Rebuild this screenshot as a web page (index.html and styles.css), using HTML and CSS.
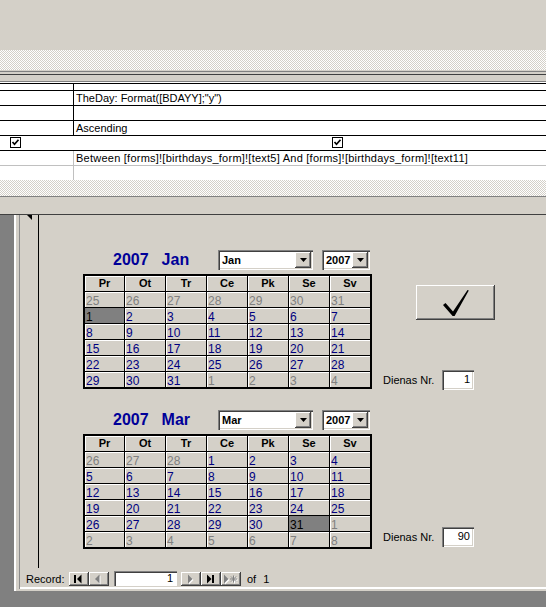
FILE: index.html
```html
<!DOCTYPE html>
<html lang="lv">
<head>
    <meta charset="UTF-8">
    <title>birthdays_form</title>
    <link rel="stylesheet" href="styles.css">
</head>
<body>

<!-- Query design window (lower pane) -->
<div class="query">
    <div class="query-pane"></div>
    <div class="dither"></div>
    <div class="splitter"></div>
    <div class="grid">
        <div class="grid-row selectors"><div class="grid-label"></div><div class="grid-cell"></div></div>
        <div class="grid-row"><div class="grid-label"></div><div class="grid-cell">TheDay: Format([BDAYY];"y")</div></div>
        <div class="grid-row"><div class="grid-label"></div><div class="grid-cell"></div></div>
        <div class="grid-row"><div class="grid-label"></div><div class="grid-cell">Ascending</div></div>
        <div class="grid-row show">
            <div class="grid-label"><span class="check check-first"><svg width="9" height="9" viewBox="0 0 9 9"><path d="M1.5 4 L3.5 6.2 L7.5 1.8" fill="none" stroke="#000" stroke-width="1.7"/></svg></span></div>
            <div class="grid-cell"><span class="check check-second"><svg width="9" height="9" viewBox="0 0 9 9"><path d="M1.5 4 L3.5 6.2 L7.5 1.8" fill="none" stroke="#000" stroke-width="1.7"/></svg></span></div>
        </div>
        <div class="grid-row criteria"><div class="grid-label"></div><div class="grid-cell">Between [forms]![birthdays_form]![text5] And [forms]![birthdays_form]![text11]</div></div>
        <div class="grid-row last"><div class="grid-label"></div><div class="grid-cell"></div></div>
    </div>
    <div class="dither dither-low"></div>
    <div class="query-foot"></div>
</div>

<!-- Form window -->
<div class="workspace">
    <div class="form">
        <div class="form-inner">
            <div class="form-body">
                <div class="selector">
                    <svg class="selector-mark" width="5" height="5" viewBox="0 0 5 5"><polygon points="0,0 5,0 5,5"/></svg>
                </div>
                <div class="detail">

                    <!-- From date -->
                    <div class="cal-block">
                        <div class="cal">
                            <div class="cal-head">
                                <div class="cal-title">2007<span class="cal-month">Jan</span></div>
                                <div class="combo combo-month">
                                    <span class="combo-text">Jan</span>
                                    <span class="combo-btn"><svg width="7" height="4" viewBox="0 0 7 4"><polygon points="0,0 7,0 3.5,4"/></svg></span>
                                </div>
                                <div class="combo combo-year">
                                    <span class="combo-text">2007</span>
                                    <span class="combo-btn"><svg width="7" height="4" viewBox="0 0 7 4"><polygon points="0,0 7,0 3.5,4"/></svg></span>
                                </div>
                            </div>
                            <div class="cal-grid">
                                <div class="dow">Pr</div><div class="dow">Ot</div><div class="dow">Tr</div><div class="dow">Ce</div><div class="dow">Pk</div><div class="dow">Se</div><div class="dow">Sv</div>
                                <div class="day out">25</div><div class="day out">26</div><div class="day out">27</div><div class="day out">28</div><div class="day out">29</div><div class="day out">30</div><div class="day out">31</div>
                                <div class="day sel">1</div><div class="day">2</div><div class="day">3</div><div class="day">4</div><div class="day">5</div><div class="day">6</div><div class="day">7</div>
                                <div class="day">8</div><div class="day">9</div><div class="day">10</div><div class="day">11</div><div class="day">12</div><div class="day">13</div><div class="day">14</div>
                                <div class="day">15</div><div class="day">16</div><div class="day">17</div><div class="day">18</div><div class="day">19</div><div class="day">20</div><div class="day">21</div>
                                <div class="day">22</div><div class="day">23</div><div class="day">24</div><div class="day">25</div><div class="day">26</div><div class="day">27</div><div class="day">28</div>
                                <div class="day">29</div><div class="day">30</div><div class="day">31</div><div class="day out">1</div><div class="day out">2</div><div class="day out">3</div><div class="day out">4</div>
                            </div>
                        </div>
                        <div class="side">
                            <div class="ok-btn">
                                <svg width="28" height="28" viewBox="0 0 28 28"><polygon points="1,16 3.5,14 11,22.5 25.5,1 26.8,1.6 12.6,27 10.6,27"/></svg>
                            </div>
                            <div class="dienas">
                                <span class="dienas-label">Dienas Nr.</span>
                                <div class="field">1</div>
                            </div>
                        </div>
                    </div>

                    <!-- To date -->
                    <div class="cal-block second">
                        <div class="cal">
                            <div class="cal-head">
                                <div class="cal-title">2007<span class="cal-month">Mar</span></div>
                                <div class="combo combo-month">
                                    <span class="combo-text">Mar</span>
                                    <span class="combo-btn"><svg width="7" height="4" viewBox="0 0 7 4"><polygon points="0,0 7,0 3.5,4"/></svg></span>
                                </div>
                                <div class="combo combo-year">
                                    <span class="combo-text">2007</span>
                                    <span class="combo-btn"><svg width="7" height="4" viewBox="0 0 7 4"><polygon points="0,0 7,0 3.5,4"/></svg></span>
                                </div>
                            </div>
                            <div class="cal-grid">
                                <div class="dow">Pr</div><div class="dow">Ot</div><div class="dow">Tr</div><div class="dow">Ce</div><div class="dow">Pk</div><div class="dow">Se</div><div class="dow">Sv</div>
                                <div class="day out">26</div><div class="day out">27</div><div class="day out">28</div><div class="day">1</div><div class="day">2</div><div class="day">3</div><div class="day">4</div>
                                <div class="day">5</div><div class="day">6</div><div class="day">7</div><div class="day">8</div><div class="day">9</div><div class="day">10</div><div class="day">11</div>
                                <div class="day">12</div><div class="day">13</div><div class="day">14</div><div class="day">15</div><div class="day">16</div><div class="day">17</div><div class="day">18</div>
                                <div class="day">19</div><div class="day">20</div><div class="day">21</div><div class="day">22</div><div class="day">23</div><div class="day">24</div><div class="day">25</div>
                                <div class="day">26</div><div class="day">27</div><div class="day">28</div><div class="day">29</div><div class="day">30</div><div class="day sel">31</div><div class="day out">1</div>
                                <div class="day out">2</div><div class="day out">3</div><div class="day out">4</div><div class="day out">5</div><div class="day out">6</div><div class="day out">7</div><div class="day out">8</div>
                            </div>
                        </div>
                        <div class="side">
                            <div class="dienas">
                                <span class="dienas-label">Dienas Nr.</span>
                                <div class="field">90</div>
                            </div>
                        </div>
                    </div>

                </div>
            </div>

            <!-- Record navigation -->
            <div class="nav">
                <span class="nav-label">Record:</span>
                <span class="nav-btn"><svg width="20" height="14" viewBox="0 0 20 14"><rect x="5" y="3" width="2" height="8"/><polygon points="12.5,2.5 12.5,11.5 8,7"/></svg></span>
                <span class="nav-btn"><svg width="20" height="14" viewBox="0 0 20 14"><polygon points="11.5,3.5 11.5,12.5 7,8" fill="#fff"/><polygon points="10.5,2.5 10.5,11.5 6,7" fill="#808080"/></svg></span>
                <span class="nav-field">1</span>
                <span class="nav-btn gap"><svg width="20" height="14" viewBox="0 0 20 14"><polygon points="8,3.5 8,12.5 12.5,8" fill="#fff"/><polygon points="7,2.5 7,11.5 11.5,7" fill="#808080"/></svg></span>
                <span class="nav-btn"><svg width="20" height="14" viewBox="0 0 20 14"><polygon points="6,2.5 6,11.5 10.5,7"/><rect x="11" y="3" width="2" height="8"/></svg></span>
                <span class="nav-btn"><svg width="20" height="14" viewBox="0 0 20 14">
                    <g fill="#fff" stroke="#fff" transform="translate(1,1)"><polygon points="3,2.5 3,11.5 7.5,7" stroke="none"/><path d="M9 7 H16 M12.5 3.5 V10.5 M10 4.5 L15 9.5 M15 4.5 L10 9.5"/></g>
                    <g fill="#808080" stroke="#808080"><polygon points="3,2.5 3,11.5 7.5,7" stroke="none"/><path d="M9 7 H16 M12.5 3.5 V10.5 M10 4.5 L15 9.5 M15 4.5 L10 9.5"/></g>
                </svg></span>
                <span class="nav-of">of</span>
                <span class="nav-count">1</span>
            </div>
        </div>
    </div>
</div>

</body>
</html>
```

FILE: styles.css
```css
body {
    margin: 0;
    width: 546px;
    height: 607px;
    overflow: hidden;
    background-color: #808080;
    font-family: 'Liberation Sans', Arial, sans-serif;
    font-size: 11px;
    color: #000;
}

/* query design grid */
.query {
    background-color: #d4d0c8;
}
.query-pane {
    height: 50px;
}
.dither {
    height: 20px;
    background-image: repeating-conic-gradient(#ffffff 0 25%, #d4d0c8 0 50%);
    background-size: 2px 2px;
}
.dither-low {
    height: 16px;
}
.splitter {
    height: 14px;
    background: linear-gradient(to bottom,
        #d4d0c8 0 1px, #808080 1px 2px, #d4d0c8 2px 4px, #404040 4px 5px,
        #d4d0c8 5px 11px, #808080 11px 12px, #ffffff 12px 13px, #000 13px 14px);
}
.grid {
    background-color: #fff;
}
.grid-row {
    display: flex;
    height: 14px;
    line-height: 14px;
    border-bottom: 1px solid #000;
}
.grid-row.selectors {
    height: 6px;
}
.grid-row.criteria {
    border-bottom-color: #c0c0c0;
    letter-spacing: 0.24px;
}
.grid-row.last {
    border-bottom: none;
}
.grid-label {
    width: 73px;
    flex-shrink: 0;
    border-right: 1px solid #000;
}
.grid-row.show .grid-label {
    border-right-color: transparent;
}
.grid-row.criteria .grid-label,
.grid-row.last .grid-label {
    border-right-color: #c0c0c0;
}
.grid-cell {
    flex: 1;
    padding-left: 2px;
    white-space: nowrap;
}
.check {
    display: flex;
    align-items: center;
    justify-content: center;
    width: 11px;
    height: 11px;
    box-sizing: border-box;
    margin-top: 1px;
    border: 1px solid #000;
    background-color: #fff;
}
.check-first {
    margin-left: 10px;
}
.check-second {
    margin-left: 256px;
}
.query-foot {
    height: 17px;
    border-top: 1px solid #808080;
    border-bottom: 1px solid #404040;
}

/* form window */
.workspace {
    display: flex;
    height: 392px;
}
.form {
    display: flex;
    flex: 1;
    height: 376px;
    box-sizing: border-box;
    margin-left: 14px;
    padding: 0 0 2px 3px;
    border-left: 2px solid #fff;
    background-color: #d4d0c8;
}
.form-inner {
    flex: 1;
    display: flex;
    flex-direction: column;
    border-left: 1px solid #8c8c8c;
}
.form-body {
    display: flex;
    height: 353px;
}
.selector {
    width: 18px;
    flex-shrink: 0;
    border-right: 1px solid #000;
}
.selector-mark {
    display: block;
    margin-left: 7px;
}
.detail {
    flex: 1;
    padding: 35px 0 0 44px;
}

/* calendars */
.cal-block {
    display: flex;
}
.cal-block.second {
    margin-top: 21px;
}
.cal-head {
    display: flex;
    align-items: center;
    height: 20px;
    margin-bottom: 4px;
}
.cal-title {
    width: 105px;
    padding-left: 30px;
    font-size: 16px;
    font-weight: bold;
    color: #000099;
    white-space: nowrap;
}
.cal-month {
    margin-left: 13px;
}
.combo {
    display: flex;
    height: 20px;
    box-sizing: border-box;
    padding: 2px;
    background-color: #fff;
    box-shadow: inset 1px 1px #808080, inset 2px 2px #404040, inset -1px -1px #fff, inset -2px -2px #d4d0c8;
}
.combo-month {
    width: 95px;
}
.combo-year {
    width: 48px;
    margin-left: 9px;
}
.combo-text {
    flex: 1;
    padding-left: 2px;
    font-weight: bold;
    line-height: 16px;
}
.combo-btn {
    display: flex;
    align-items: center;
    justify-content: center;
    width: 16px;
    height: 16px;
    background-color: #d4d0c8;
    box-shadow: inset -1px -1px #404040, inset 1px 1px #fff, inset -2px -2px #808080;
}
.cal-grid {
    display: grid;
    grid-template-columns: 39px repeat(6, 40px);
    grid-auto-rows: 15px;
    gap: 1px;
    width: fit-content;
    border: 2px solid #000;
    background-color: #000;
}
.dow {
    background-color: #d4d0c8;
    box-shadow: inset 1px 1px #fff;
    font-weight: bold;
    text-align: center;
    line-height: 15px;
}
.day {
    box-sizing: border-box;
    padding: 3px 0 0 1px;
    font-size: 12px;
    line-height: 13px;
    background-color: #d4d0c8;
    box-shadow: inset 1px 1px #fff;
    color: #000080;
}
.day.out {
    color: #808080;
}
.day.sel {
    background-color: #808080;
    box-shadow: none;
    color: #000;
}
.side {
    display: flex;
    flex-direction: column;
    align-items: flex-start;
}
.ok-btn {
    display: flex;
    align-items: center;
    justify-content: center;
    width: 79px;
    height: 35px;
    margin: 35px 0 0 44px;
    background-color: #d4d0c8;
    box-shadow: inset -1px -1px #404040, inset 1px 1px #fff, inset -2px -2px #808080;
}
.dienas {
    display: flex;
    align-items: center;
    margin: auto 0 -1px 11px;
}
.cal-block.second .dienas {
    margin-bottom: 2px;
}
.dienas-label {
    width: 59px;
}
.field {
    width: 32px;
    height: 20px;
    box-sizing: border-box;
    padding: 3px 4px 0 0;
    text-align: right;
    line-height: 13px;
    background-color: #fff;
    box-shadow: inset 1px 1px #808080, inset 2px 2px #404040, inset -1px -1px #fff, inset -2px -2px #d4d0c8;
}

/* record navigation */
.nav {
    display: flex;
    align-items: flex-start;
    height: 21px;
    box-sizing: border-box;
    padding: 4px 0 0 6px;
    border-bottom: 2px solid #fff;
    line-height: 14px;
}
.nav-label {
    width: 43px;
}
.nav-btn {
    display: block;
    width: 20px;
    height: 14px;
    background-color: #d4d0c8;
    box-shadow: inset -1px -1px #404040, inset 1px 1px #fff, inset -2px -2px #808080;
}
.nav-btn svg {
    display: block;
}
.nav-btn.gap {
    margin-left: 4px;
}
.nav-field {
    width: 63px;
    height: 15px;
    box-sizing: border-box;
    margin: -1px 0 0 5px;
    padding-right: 4px;
    text-align: right;
    line-height: 15px;
    background-color: #fff;
    box-shadow: inset 1px 1px #808080, inset 2px 2px #404040, inset -1px -1px #fff;
}
.nav-of {
    margin-left: 6px;
}
.nav-count {
    margin-left: 7px;
}
```
